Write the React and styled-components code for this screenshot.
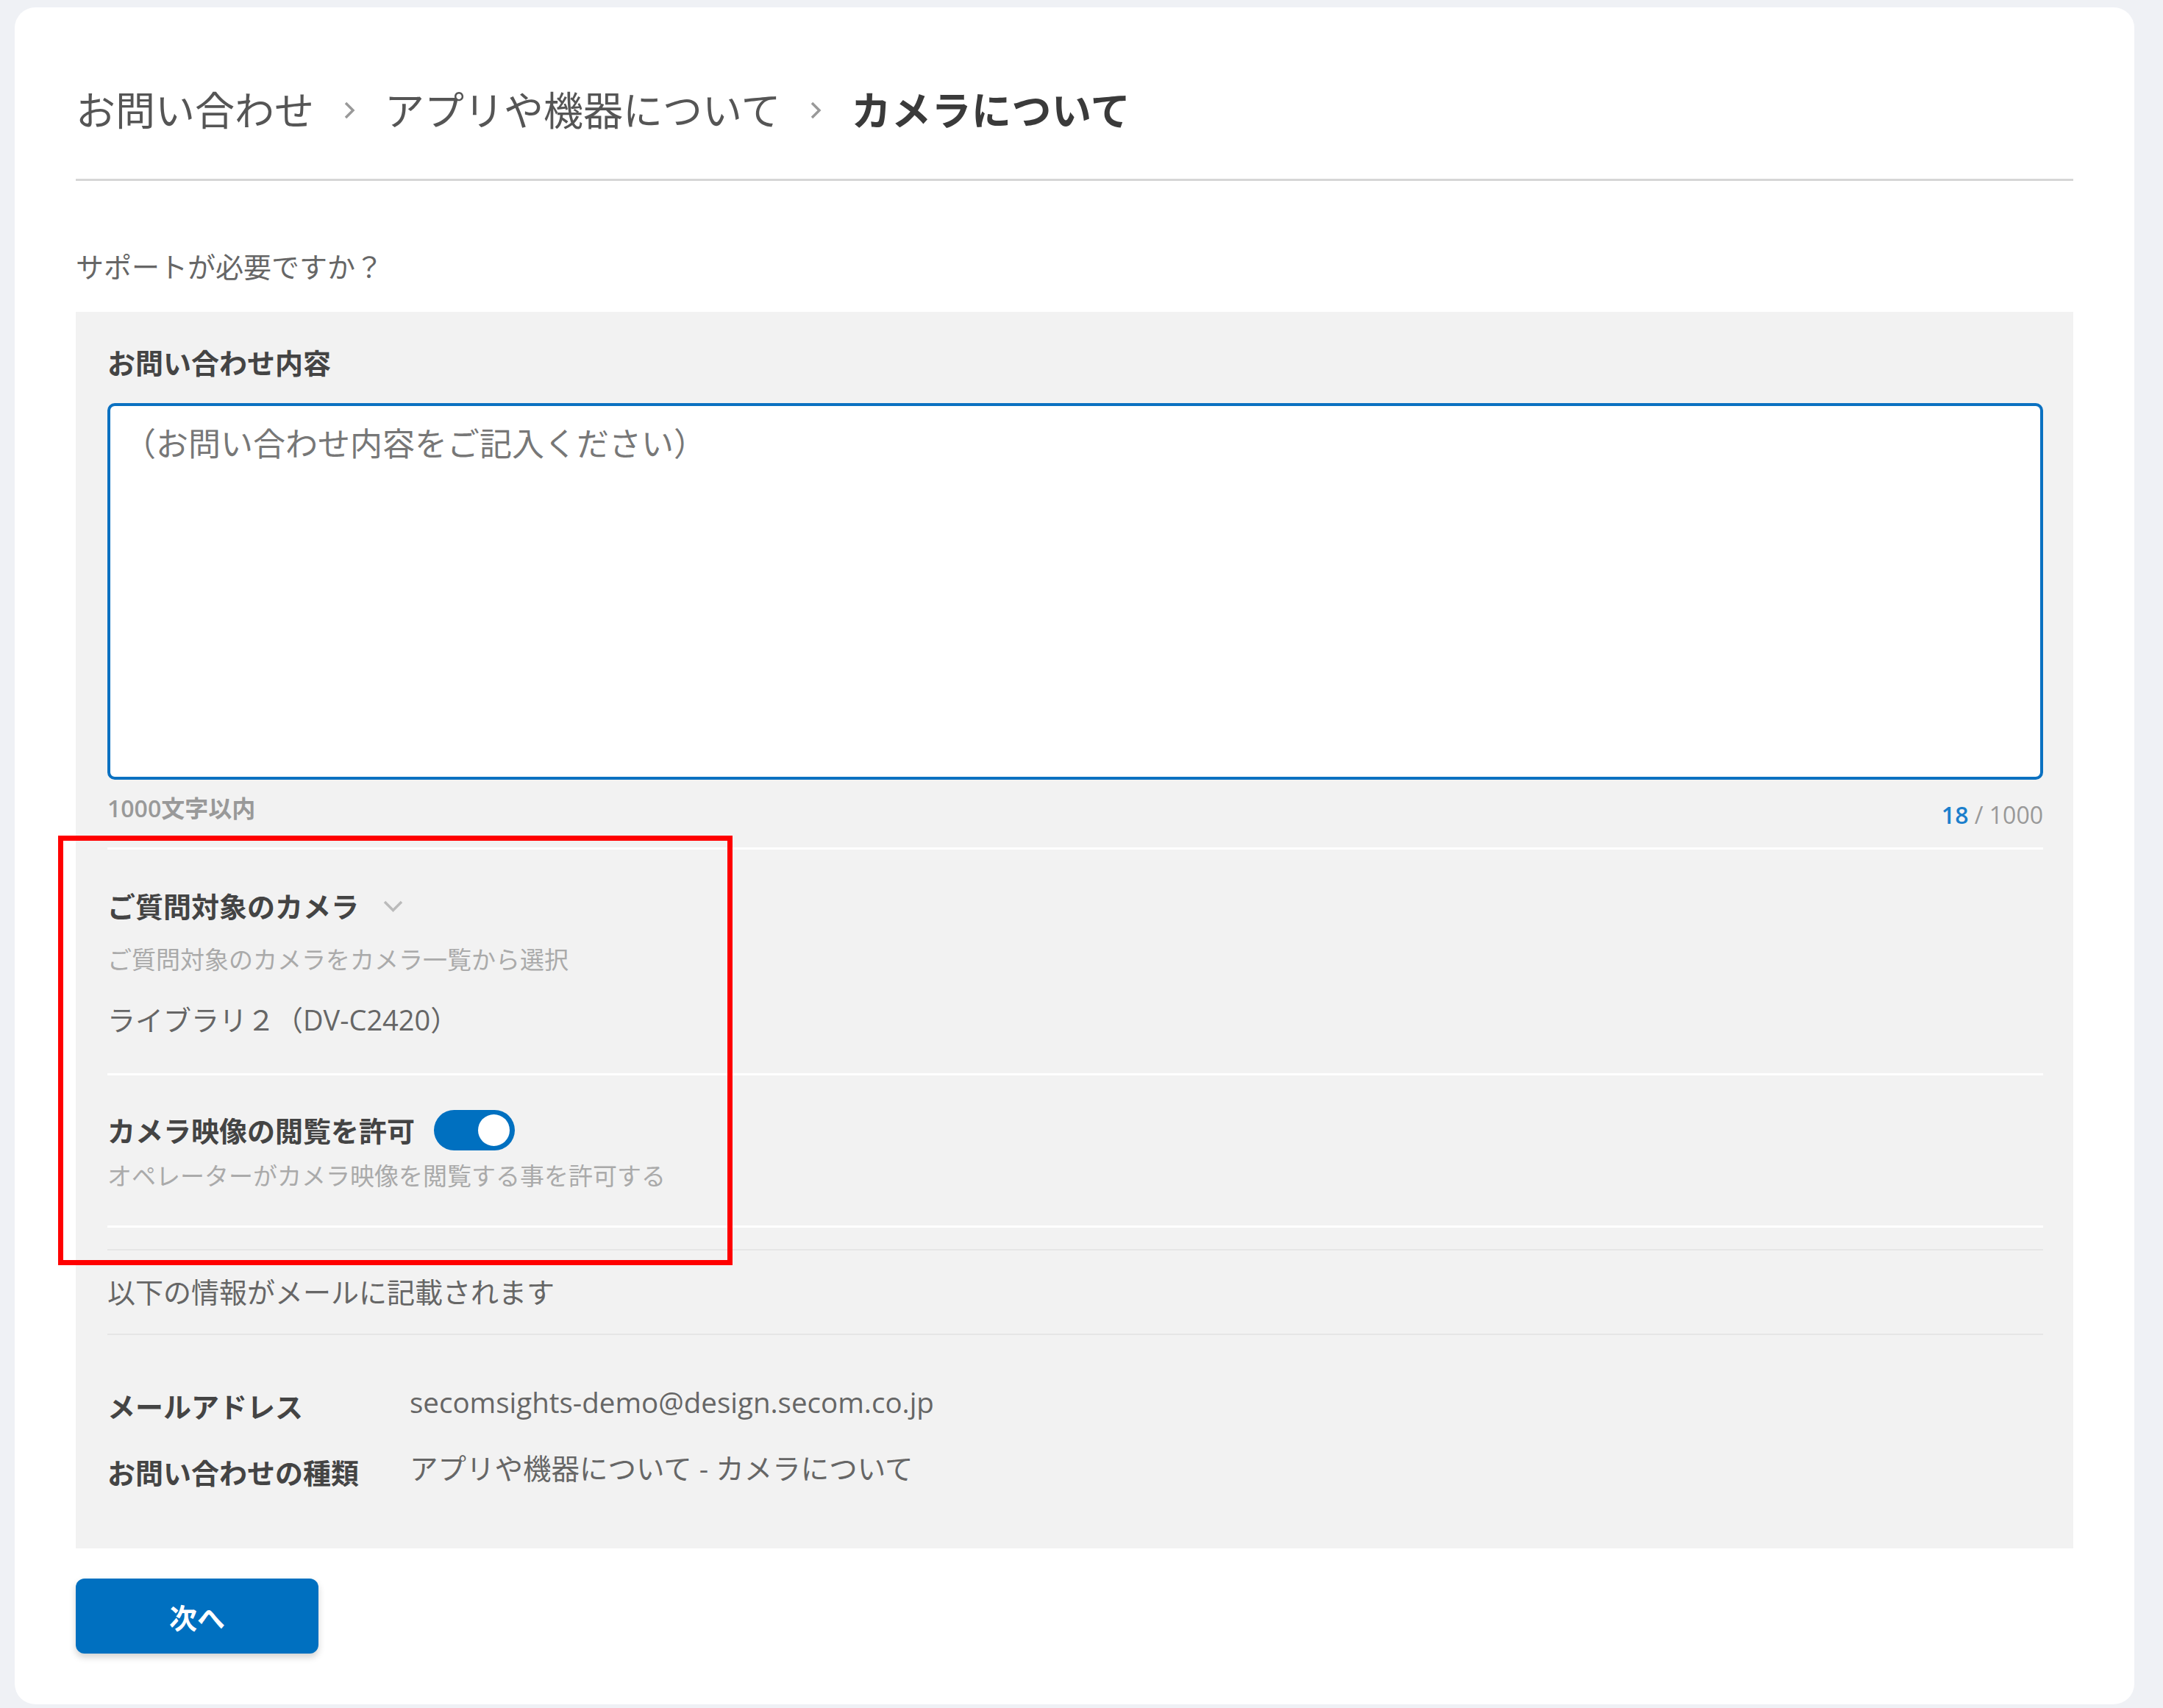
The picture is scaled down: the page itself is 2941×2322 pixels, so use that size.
import React from 'react';
import styled, { createGlobalStyle } from 'styled-components';

const GlobalStyle = createGlobalStyle`
  html, body {
    margin: 0;
    padding: 0;
    background: #eff1f5;
  }
  body {
    font-family: "Open Sans", "Noto Sans CJK JP", sans-serif;
    color: #444;
  }
  * {
    box-sizing: border-box;
  }
`;

const Page = styled.div`
  position: relative;
  padding: 10px 0 0 20px;
`;

const Card = styled.main`
  width: 2882px;
  background: #fff;
  border-radius: 28px;
  padding: 102px 83px 69px;
`;

const Breadcrumb = styled.nav`
  display: flex;
  align-items: center;
  gap: 37px;
  padding-bottom: 55px;
  border-bottom: 3px solid #d6d6d6;
`;

const Crumb = styled.span`
  font-size: 54px;
  line-height: 76px;
  font-weight: ${(p) => (p.$current ? 700 : 400)};
  color: ${(p) => (p.$current ? '#3a3a3a' : '#555')};
  letter-spacing: ${(p) => (p.$current ? '0.5px' : '0')};
`;

const Lead = styled.p`
  margin: 89px 0 35px;
  font-size: 38px;
  line-height: 54px;
  color: #666;
`;

const Panel = styled.section`
  background: #f2f2f2;
  padding: 42px 41px 76px 43px;
`;

const Label = styled.div`
  display: flex;
  align-items: center;
  gap: ${(p) => p.$gap || 32}px;
  font-size: 38px;
  line-height: 54px;
  font-weight: 700;
  color: #444;
`;

const TextArea = styled.textarea`
  display: block;
  width: 100%;
  height: 512px;
  margin-top: 28px;
  padding: 20px 18px;
  border: 4px solid #0b71c1;
  border-radius: 10px;
  background: #fff;
  resize: none;
  outline: none;
  font-family: "Open Sans", "Noto Sans CJK JP", sans-serif;
  font-size: 44px;
  line-height: 62px;
  color: #444;

  &::placeholder {
    color: #777;
  }
`;

const MetaRow = styled.div`
  display: flex;
  justify-content: space-between;
  align-items: flex-start;
  margin-top: 17px;
  font-size: 32px;
  line-height: 44px;
  font-weight: 600;
  color: #999;
`;

const Counter = styled.span`
  padding-top: 9px;
  font-weight: 400;

  b {
    font-weight: 600;
    color: #1b7fcc;
  }
`;

const Rule = styled.hr`
  margin: ${(p) => p.$mt || 0}px 0 0;
  border: 0;
  height: ${(p) => (p.$faint ? 2 : 3)}px;
  background: ${(p) => (p.$faint ? '#e6e6e6' : '#fff')};
`;

const Block = styled.div`
  padding-top: ${(p) => p.$pt}px;
`;

const Hint = styled.div`
  margin-top: ${(p) => p.$mt}px;
  font-size: 33px;
  line-height: 44px;
  color: #aaa;
`;

const Value = styled.div`
  margin-top: 32px;
  font-size: 38px;
  line-height: 54px;
  color: #666;
`;

const Toggle = styled.span`
  position: relative;
  display: inline-block;
  width: 110px;
  height: 55px;
  border-radius: 28px;
  background: #0070c0;

  &::after {
    content: '';
    position: absolute;
    top: 6px;
    right: 7px;
    width: 43px;
    height: 43px;
    border-radius: 50%;
    background: #fff;
  }
`;

const Notice = styled.p`
  margin: 29px 0 0;
  font-size: 38px;
  line-height: 54px;
  color: #666;
`;

const InfoGrid = styled.dl`
  display: grid;
  grid-template-columns: 411px 1fr;
  row-gap: 36px;
  margin: 70px 0 0;
`;

const InfoKey = styled.dt`
  font-size: 38px;
  line-height: 54px;
  font-weight: 700;
  color: #444;
`;

const InfoValue = styled.dd`
  margin: 0;
  font-size: 38.5px;
  line-height: 42px;
  color: #666;
`;

const NextButton = styled.button`
  display: block;
  width: 330px;
  height: 102px;
  margin-top: 41px;
  border: 0;
  border-radius: 12px;
  background: #0070c0;
  box-shadow: 0 5px 10px rgba(0, 0, 0, 0.18);
  font-family: "Open Sans", "Noto Sans CJK JP", sans-serif;
  font-size: 38px;
  font-weight: 700;
  color: #fff;
`;

const Highlight = styled.div`
  position: absolute;
  left: 79px;
  top: 1136px;
  width: 917px;
  height: 584px;
  border: 7px solid #ff0000;
  pointer-events: none;
`;

const Chevron = () => (
  <svg width="22" height="30" viewBox="0 0 22 30" fill="none">
    <path d="M6 5l10 10-10 10" stroke="#999" strokeWidth="3.5" />
  </svg>
);

const ChevronDown = () => (
  <svg width="29" height="18" viewBox="0 0 29 18" fill="none">
    <path d="M3 3l11.5 11.5L26 3" stroke="#bbb" strokeWidth="3.5" />
  </svg>
);

const info = [
  ['メールアドレス', 'secomsights-demo@design.secom.co.jp'],
  ['お問い合わせの種類', 'アプリや機器について - カメラについて'],
];

export default function App() {
  return (
    <Page>
      <GlobalStyle />
      <Card>
        <Breadcrumb>
          <Crumb>お問い合わせ</Crumb>
          <Chevron />
          <Crumb>アプリや機器について</Crumb>
          <Chevron />
          <Crumb $current>カメラについて</Crumb>
        </Breadcrumb>

        <Lead>サポートが必要ですか？</Lead>

        <Panel>
          <Label>お問い合わせ内容</Label>
          <TextArea placeholder="（お問い合わせ内容をご記入ください）" />
          <MetaRow>
            <span>1000文字以内</span>
            <Counter>
              <b>18</b> / 1000
            </Counter>
          </MetaRow>
          <Rule $mt={22} />

          <Block $pt={50}>
            <Label>
              ご質問対象のカメラ
              <ChevronDown />
            </Label>
            <Hint $mt={24}>ご質問対象のカメラをカメラ一覧から選択</Hint>
            <Value>ライブラリ２（DV-C2420）</Value>
          </Block>
          <Rule $mt={46} />

          <Block $pt={47}>
            <Label $gap={26}>
              カメラ映像の閲覧を許可
              <Toggle role="switch" aria-checked="true" />
            </Label>
            <Hint $mt={13}>オペレーターがカメラ映像を閲覧する事を許可する</Hint>
          </Block>
          <Rule $mt={45} />
          <Rule $mt={29} $faint />

          <Notice>以下の情報がメールに記載されます</Notice>
          <Rule $mt={30} $faint />

          <InfoGrid>
            {info.map(([k, v]) => (
              <React.Fragment key={k}>
                <InfoKey>{k}</InfoKey>
                <InfoValue>{v}</InfoValue>
              </React.Fragment>
            ))}
          </InfoGrid>
        </Panel>

        <NextButton type="button">次へ</NextButton>
      </Card>
      <Highlight />
    </Page>
  );
}
